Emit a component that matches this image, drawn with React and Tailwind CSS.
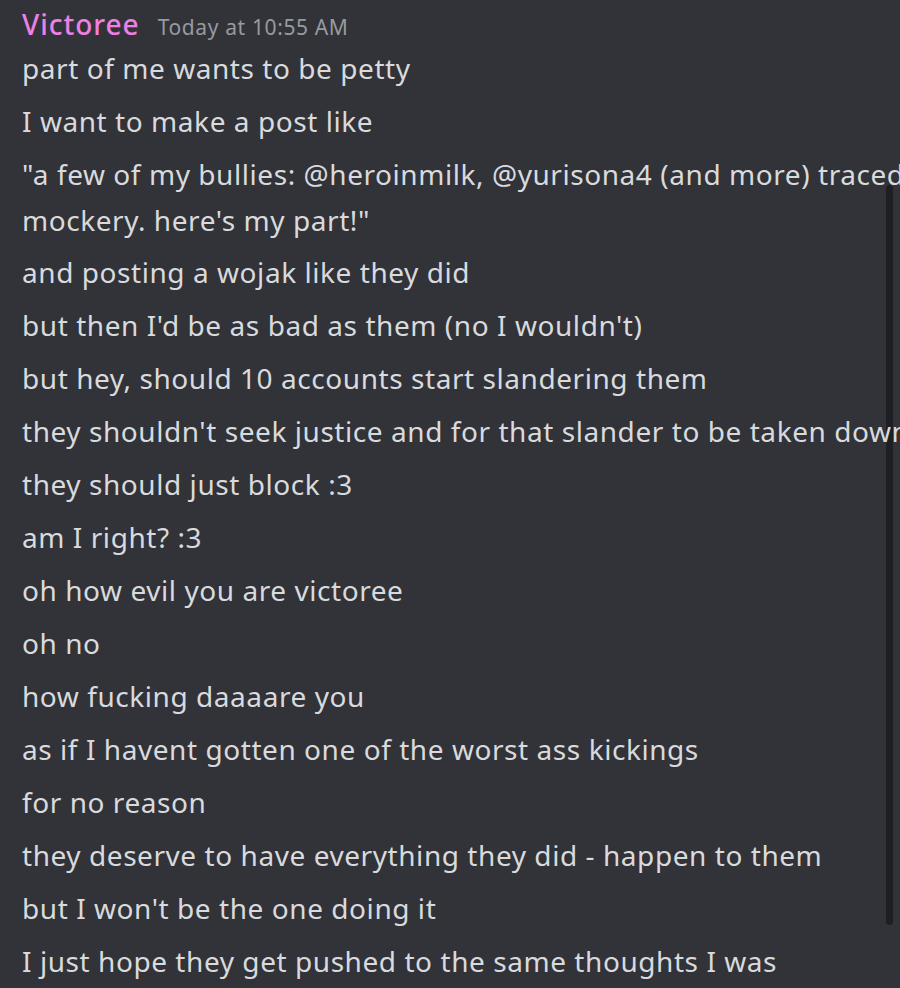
import React from "react";

const lines = [
  "part of me wants to be petty",
  "I want to make a post like",
  ["\"a few of my bullies: @heroinmilk, @yurisona4 (and more) traced me in", "mockery. here's my part!\""],
  "and posting a wojak like they did",
  "but then I'd be as bad as them (no I wouldn't)",
  "but hey, should 10 accounts start slandering them",
  "they shouldn't seek justice and for that slander to be taken down",
  "they should just block :3",
  "am I right? :3",
  "oh how evil you are victoree",
  "oh no",
  "how fucking daaaare you",
  "as if I havent gotten one of the worst ass kickings",
  "for no reason",
  "they deserve to have everything they did - happen to them",
  "but I won't be the one doing it",
  "I just hope they get pushed to the same thoughts I was",
];

export default function App() {
  return (
    <div
      className="relative w-[900px] h-[988px] overflow-hidden bg-[#313338]"
      style={{ fontFamily: '"Noto Sans", "Open Sans", sans-serif' }}
    >
      <div className="absolute left-[886px] top-[185px] w-[7px] h-[740px] rounded-full bg-[#1e1f22]" />
      <div className="relative pl-[22px] pt-[3px] w-[1200px]">
        <div className="flex items-baseline gap-[18px] h-[39px] whitespace-nowrap">
          <span className="text-[28px] tracking-[0.035em] text-[#ee7fe4] font-medium">Victoree</span>
          <span className="text-[21px] tracking-[0.03em] text-[#989aa1]">Today at 10:55 AM</span>
        </div>
        <div className="flex flex-col text-[28px] tracking-[0.02em] text-[#d9dadd] whitespace-nowrap">
          {lines.map((l, i) =>
            Array.isArray(l) ? (
              <div key={i} className="py-[3px] leading-[46px] w-[1150px]">
                <div>{l[0]}</div>
                <div>{l[1]}</div>
              </div>
            ) : (
              <div key={i} className="py-[3px] leading-[47px]">{l}</div>
            )
          )}
        </div>
      </div>
    </div>
  );
}
